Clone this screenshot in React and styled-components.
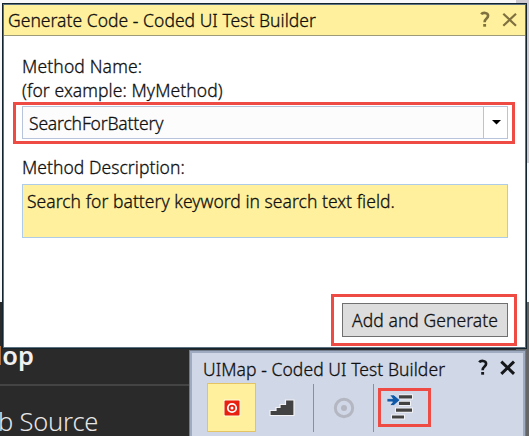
import React from "react";
import styled, { createGlobalStyle } from "styled-components";

const Global = createGlobalStyle`
  * { box-sizing: border-box; }
  body { margin: 0; overflow: hidden; }
`;

const Desktop = styled.div`
  position: relative;
  width: 529px;
  height: 436px;
  overflow: hidden;
  display: flex;
  flex-direction: column;
  background: #f8f8fb;
  font-family: "Noto Sans", "Open Sans", sans-serif;
  color: #111;
`;

const UpperPage = styled.div`
  height: 302px;
  display: flex;
  justify-content: flex-end;
`;

const PageEdge = styled.div`
  width: 13px;
  height: 163px;
  background: #cdcad1;
`;

const LowerPage = styled.div`
  flex: 1;
  display: flex;
  background: #666;
`;

const Sidebar = styled.div`
  width: 516px;
  height: 134px;
  background: #2a2a2a;
  white-space: nowrap;
`;

const SidebarHeading = styled.div`
  height: 84px;
  padding-top: 34px;
  margin-left: -5px;
  border-bottom: 2px solid #444;
  color: #f0f0f0;
  font-size: 25.5px;
  line-height: 38px;
  font-weight: 600;
`;

const SidebarItem = styled.div`
  padding-top: 18px;
  margin-left: -2px;
  color: #e6e6e6;
  font-size: 25.5px;
  line-height: 34px;
  font-weight: 300;
  letter-spacing: -0.2px;
`;

const Text = styled.div`
  font-size: 17.5px;
  line-height: 24px;
  font-weight: 300;
  -webkit-text-stroke: 0.3px currentColor;
  letter-spacing: ${(p) => p.$track ?? 0.03}px;
  white-space: nowrap;
`;

const Dialog = styled.section`
  position: absolute;
  left: 2px;
  top: 3px;
  width: 525px;
  height: 346px;
  display: flex;
  flex-direction: column;
  background: #fff;
  border: 1px solid #13242f;
  box-shadow: inset 0 0 0 1px #5d7280;
`;

const DialogTitle = styled.header`
  height: 31px;
  margin: 1px 1px 0;
  padding: 0 4px 0 4px;
  display: flex;
  align-items: center;
  background: #fef09c;
  border-bottom: 1px solid #9d9b78;
`;

const TitleIcons = styled.div`
  margin-left: auto;
  display: flex;
`;

const DialogBody = styled.div`
  flex: 1;
  display: flex;
  flex-direction: column;
  padding: 18px 9px 2px 10px;
`;

const Label = styled(Text)`
  margin-left: 9px;
  margin-top: ${(p) => p.$gap || 0}px;
`;

const Highlight = styled.div`
  display: flex;
  border: 3px solid #ee4b45;
  width: ${(p) => p.$w}px;
  height: ${(p) => p.$h}px;
  padding: ${(p) => p.$pad || 0};
  align-self: ${(p) => p.$align || "auto"};
`;

const Combo = styled.div`
  flex: 1;
  display: flex;
  border: 1px solid #b8c3dc;
  background: #fcfcfc;
`;

const ComboValue = styled(Text)`
  flex: 1;
  padding: 4px 0 0 6px;
`;

const ComboToggle = styled.div`
  width: 24px;
  padding-left: 1px;
  border-left: 1px solid #b8c3dc;
  background: #fff;
  display: flex;
  align-items: center;
  justify-content: center;
`;

const Description = styled.div`
  width: 486px;
  height: 54px;
  margin: 5px 0 56px 9px;
  padding: 4px 0 0 4px;
  background: #fef09c;
  border: 1px solid #aecbe8;
`;

const GenerateButton = styled.button`
  flex: 1;
  padding: 0;
  border: 1px solid #707070;
  border-radius: 0;
  background: #ddd;
  color: #111;
  font-family: inherit;
`;

const Toolbox = styled.section`
  position: absolute;
  left: 189px;
  top: 350px;
  width: 337px;
  height: 90px;
  background: #d0d7e7;
  border: 1px solid #717d8c;
  box-shadow: inset 0 0 0 2px #9eabc0;
`;

const ToolboxTitle = styled.header`
  height: 32px;
  display: flex;
  align-items: flex-start;
  padding: 6px 6px 0 13px;
`;

const ToolRow = styled.div`
  display: flex;
  padding-left: 17px;
`;

const Tool = styled.div`
  width: ${(p) => p.$w || 49}px;
  height: 49px;
  display: flex;
  align-items: center;
  justify-content: center;
  border: 1px solid ${(p) => (p.$active ? "#e4c365" : "transparent")};
  background: ${(p) => (p.$active ? "#fef09c" : "transparent")};
`;

const StepsTool = styled(Tool)`
  padding-right: 5px;
`;

const Divider = styled.div`
  width: 1px;
  height: 48px;
  margin-top: 1px;
  background: #8591a2;
`;

const HelpIcon = ({ color, width = 26 }) => (
  <svg width={width} height="22" viewBox={`0 0 ${width} 22`} fill="none" stroke={color} strokeWidth="2.6">
    <path d="M8.2 5.2C9.5 3.5 15.1 3 15.1 6.8C15.1 9.7 11.6 9.3 11.6 13.3" />
    <path d="M10.2 15h2.9v2.7h-2.9z" fill={color} stroke="none" />
  </svg>
);

const CloseIcon = ({ color, weight }) => (
  <svg width="22" height="22" viewBox="0 0 22 22" fill="none" stroke={color} strokeWidth={weight}>
    <path d="M4.3 4.7L17 16.8M17 4.7L4.3 16.8" />
  </svg>
);

const RecordIcon = () => (
  <svg width="18" height="18" viewBox="0 0 18 18">
    <rect x=".5" y=".5" width="17" height="17" rx="1" fill="#fff" opacity=".65" />
    <rect x="1.5" y="1.5" width="15" height="15" rx="1" fill="#e8200f" />
    <circle cx="9" cy="9" r="4.2" fill="none" stroke="#fff" strokeWidth="1.8" />
    <circle cx="9" cy="9" r="1.5" fill="#fff" />
  </svg>
);

const StepsIcon = () => (
  <svg width="28" height="20" viewBox="0 0 28 20">
    <path d="M2 17.5V12.5H8V9.5H12V6.5H17.5V2H26V17.5Z" fill="#424242" stroke="#f2f2f4" strokeWidth="1.2" />
  </svg>
);

const AssertIcon = () => (
  <svg width="22" height="22" viewBox="0 0 22 22">
    <circle cx="11" cy="11" r="8.7" fill="none" stroke="#b4b7c1" strokeWidth="3" />
    <circle cx="11" cy="11" r="3" fill="#b4b7c1" />
  </svg>
);

const CodeIcon = () => (
  <svg width="28" height="30" viewBox="0 0 28 30">
    <g stroke="#f1f2f5" strokeWidth="5.2">
      <path d="M12 4.8h14M12 11.4h12M8 18.2h18M4 25h14" />
    </g>
    <g stroke="#424242" strokeWidth="3.2">
      <path d="M12 4.8h13M12 11.4h11M9 18.2h16M5 25h12" />
    </g>
    <path d="M0 6.6h5.5L2.7 2.9h4.2L13 8.1l-6.1 5.4H2.7l2.8-3.6H0z" fill="#0f59a8" stroke="#e5e9f0" strokeWidth=".7" />
  </svg>
);

export default function App() {
  return (
    <Desktop>
      <Global />
      <UpperPage><PageEdge /></UpperPage>
      <LowerPage>
        <Sidebar>
          <SidebarHeading>lop</SidebarHeading>
          <SidebarItem>b Source</SidebarItem>
        </Sidebar>
      </LowerPage>

      <Toolbox>
        <ToolboxTitle>
          <Text $track={0.07}>UIMap - Coded UI Test Builder</Text>
          <TitleIcons><HelpIcon color="#15171a" /><CloseIcon color="#15171a" weight={3} /></TitleIcons>
        </ToolboxTitle>
        <ToolRow>
          <Tool $active><RecordIcon /></Tool>
          <StepsTool $w={57}><StepsIcon /></StepsTool>
          <Divider />
          <Tool $w={59}><AssertIcon /></Tool>
          <Divider />
          <Tool $w={61}><Highlight $w={53} $h={39} $pad="1px 0 0 6px"><CodeIcon /></Highlight></Tool>
        </ToolRow>
      </Toolbox>

      <Dialog>
        <DialogTitle>
          <Text $track={0.03}>Generate Code - Coded UI Test Builder</Text>
          <TitleIcons><HelpIcon color="#7f703f" /><CloseIcon color="#7f703f" weight={2.2} /></TitleIcons>
        </DialogTitle>
        <DialogBody>
          <Label $track={0.15}>Method Name:</Label>
          <Label $track={0.09}>(for example: MyMethod)</Label>
          <Highlight $w={502} $h={42} $pad="1px 4px 2px 6px">
            <Combo>
              <ComboValue $track={-0.17}>SearchForBattery</ComboValue>
              <ComboToggle>
                <svg width="9" height="5" viewBox="0 0 9 5"><path d="M0 0h9L4.5 4.5z" fill="#000" /></svg>
              </ComboToggle>
            </Combo>
          </Highlight>
          <Label $gap={11} $track={0.05}>Method Description:</Label>
          <Description><Text>Search for battery keyword in search text field.</Text></Description>
          <Highlight $w={186} $h={52} $pad="6px 6px 6px 8px" $align="flex-end">
            <GenerateButton><Text $track={0.05}>Add and Generate</Text></GenerateButton>
          </Highlight>
        </DialogBody>
      </Dialog>
    </Desktop>
  );
}
